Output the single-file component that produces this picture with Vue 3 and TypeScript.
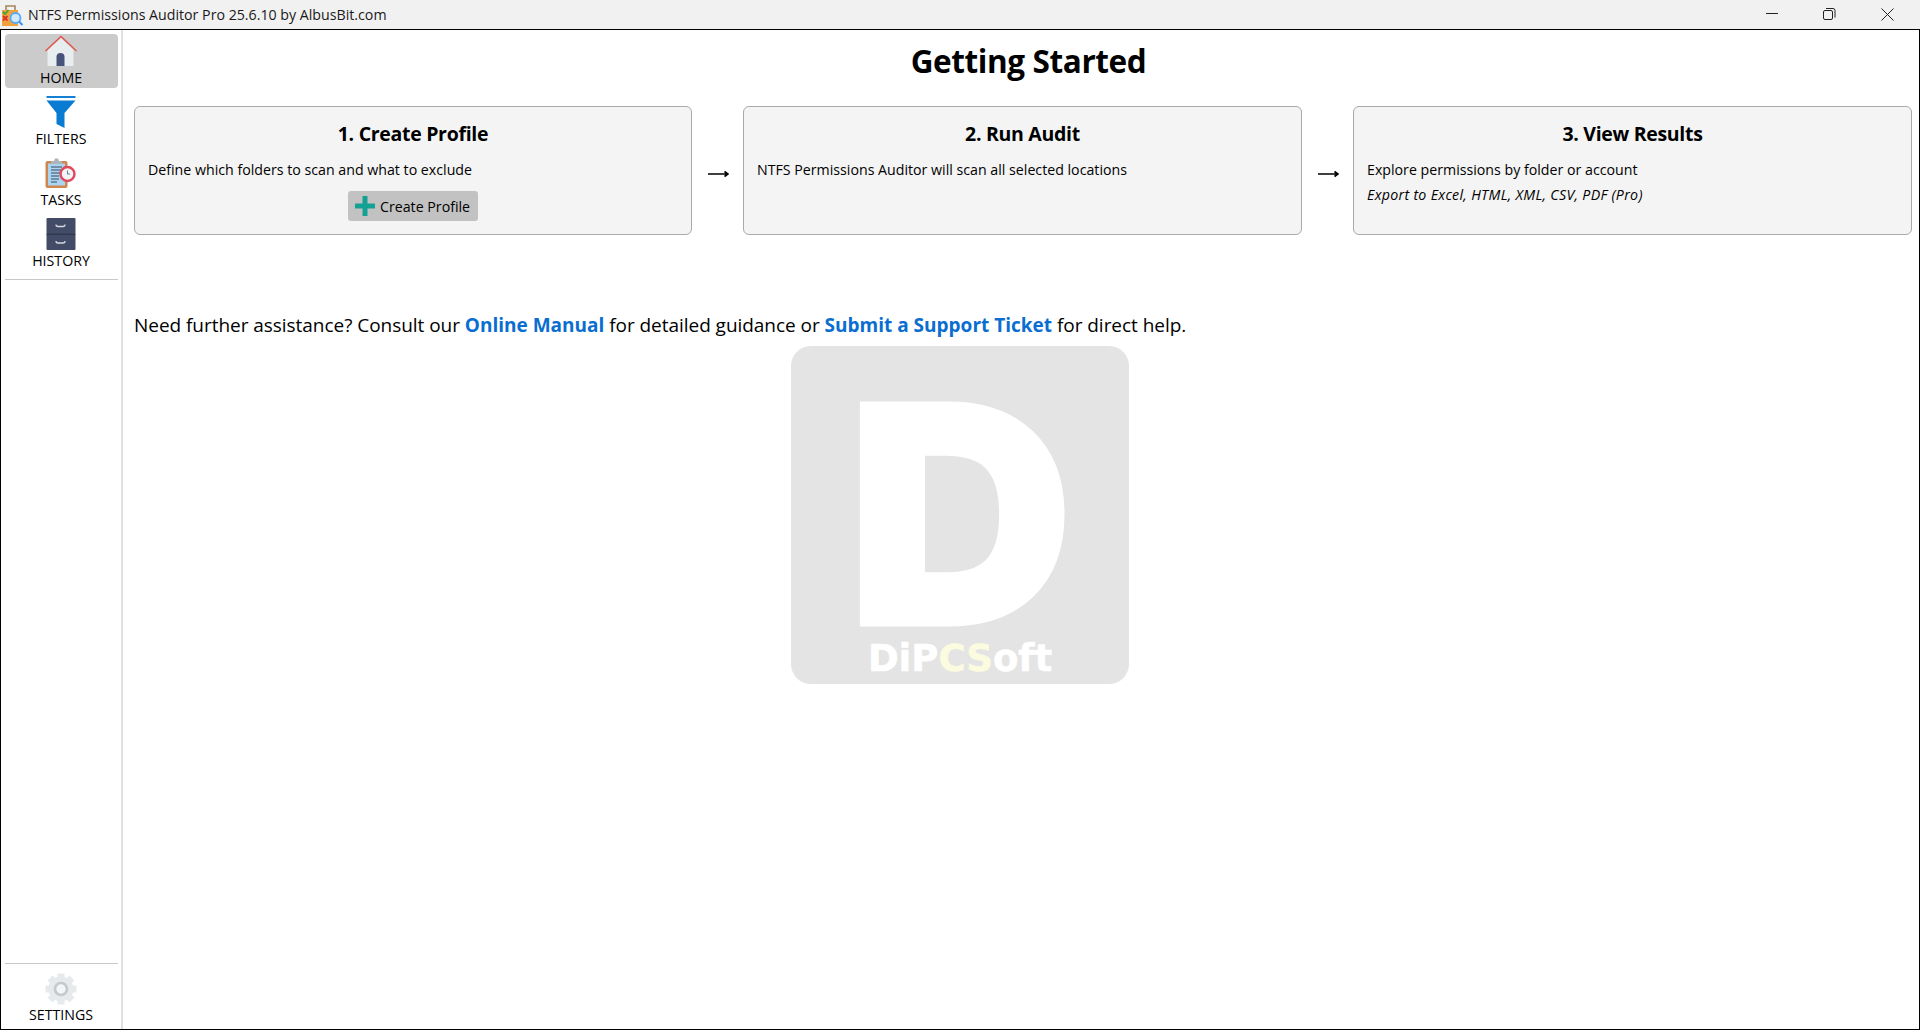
<script setup lang="ts">
interface StepCard {
  title: string
  lines: string[]
  note?: string
  action?: string
}

const navItems = [
  { id: 'home', label: 'HOME' },
  { id: 'filters', label: 'FILTERS' },
  { id: 'tasks', label: 'TASKS' },
  { id: 'history', label: 'HISTORY' },
]

const steps: StepCard[] = [
  {
    title: '1. Create Profile',
    lines: ['Define which folders to scan and what to exclude'],
    action: 'Create Profile',
  },
  {
    title: '2. Run Audit',
    lines: ['NTFS Permissions Auditor will scan all selected locations'],
  },
  {
    title: '3. View Results',
    lines: ['Explore permissions by folder or account'],
    note: 'Export to Excel, HTML, XML, CSV, PDF (Pro)',
  },
]
</script>

<template>
  <div class="window">
    <header class="titlebar">
      <svg class="app-icon" viewBox="0 0 24 24" width="24" height="24">
        <path d="M6 8V3h9v5" fill="none" stroke="#a5865c" stroke-width="1.6" />
        <rect x="2" y="7" width="16" height="16" fill="#f0a23c" />
        <path d="M3 9l2 2 3.500-4" fill="none" stroke="#3fa535" stroke-width="1.8" />
        <path d="M3 13l4.500 4.500M7.500 13L3 17.500" stroke="#d9302a" stroke-width="1.8" />
        <circle cx="15.500" cy="15" r="5" fill="#d3e8fb" stroke="#55aaff" stroke-width="1.800" />
        <path d="M19 18.500l3.500 3.500" stroke="#3f97ef" stroke-width="2.200" />
      </svg>
      <span class="app-title">NTFS Permissions Auditor Pro 25.6.10 by AlbusBit.com</span>
      <div class="win-controls">
        <svg viewBox="0 0 58 29" width="58" height="29"><path d="M24 13.500h12" stroke="#222" fill="none" /></svg>
        <svg viewBox="0 0 58 29" width="58" height="29">
          <rect x="23.500" y="10.500" width="9" height="9" rx="1.500" fill="none" stroke="#222" />
          <path d="M26 8.500h7a2 2 0 0 1 2 2v7" fill="none" stroke="#222" />
        </svg>
        <svg viewBox="0 0 58 29" width="58" height="29"><path d="M23.500 8.500l12 12M35.500 8.500l-12 12" stroke="#222" fill="none" /></svg>
      </div>
    </header>

    <div class="body">
      <nav class="sidebar">
        <div class="nav-top">
          <div v-for="item in navItems" :key="item.id" class="nav-item" :class="{ active: item.id === 'home' }">
            <svg v-if="item.id === 'home'" viewBox="0 0 34 34" width="34" height="34">
              <path d="M3.500 15L17 3l12.500 12v16H3.500z" fill="#e8edf0" />
              <path d="M1.500 16L17 1.500 32.500 16" fill="none" stroke="#e2574c" stroke-width="1.500" />
              <path d="M12.500 31V22a4 4 0 0 1 8 0v9z" fill="#47537a" />
            </svg>
            <svg v-else-if="item.id === 'filters'" viewBox="0 0 34 34" width="34" height="34">
              <rect x="2.500" y="0" width="29" height="2" fill="#1681d4" />
              <path d="M2.500 4.500h29L20.500 17v15l-8-4V17z" fill="#0a7bd2" />
            </svg>
            <svg v-else-if="item.id === 'tasks'" viewBox="0 0 34 34" width="34" height="34">
              <rect x="1.500" y="4" width="22" height="27" rx="2" fill="#d0874f" />
              <rect x="4" y="6.500" width="17" height="22" fill="#a9d5f2" />
              <path d="M11 1.500h3l1 2.500h3v3H7V4h3z" fill="#aeb4b8" />
              <path d="M7 10h11M7 13h11M7 16h9M7 19h8M7 22h8M7 25h6" stroke="#3e4a5e" stroke-width="1" />
              <circle cx="23.500" cy="17" r="7" fill="#f2f4f6" stroke="#e0485c" stroke-width="2.400" />
              <path d="M23.500 13.500V17H26" fill="none" stroke="#5d7fa8" stroke-width="1" />
            </svg>
            <svg v-else viewBox="0 0 34 34" width="34" height="34">
              <rect x="2.500" y="0" width="29" height="16" rx="1" fill="#434c66" />
              <rect x="2.500" y="16" width="29" height="16" rx="1" fill="#434c66" />
              <rect x="2.500" y="15.500" width="29" height="1.500" fill="#333a50" />
              <path d="M12 6.500q0 2 2 2h5q2 0 2-2M12 23q0 2 2 2h5q2 0 2-2" fill="none" stroke="#d6d9e2" stroke-width="1.300" />
            </svg>
            <span class="nav-label">{{ item.label }}</span>
          </div>
        </div>
        <div class="nav-bottom">
          <div class="nav-item">
            <svg viewBox="0 0 34 34" width="34" height="34">
              <circle cx="17" cy="17" r="12.500" fill="#e6eaec" />
              <path d="M17 1.500v31M1.500 17h31M6 6l22 22M28 6L6 28" stroke="#e6eaec" stroke-width="7" />
              <circle cx="17" cy="17" r="6" fill="#f3f5f6" stroke="#c6c9cb" stroke-width="2.600" />
            </svg>
            <span class="nav-label">SETTINGS</span>
          </div>
        </div>
      </nav>

      <main class="content">
        <h1 class="page-title">Getting Started</h1>
        <section class="steps">
          <template v-for="(step, i) in steps" :key="step.title">
            <article class="step-card">
              <h2>{{ step.title }}</h2>
              <p v-for="line in step.lines" :key="line">{{ line }}</p>
              <p v-if="step.note" class="note">{{ step.note }}</p>
              <button v-if="step.action" class="create-btn">
                <svg viewBox="0 0 20 20" width="20" height="20">
                  <path d="M7.500 0h5v7.500h7.500v5h-7.500v7.500h-5v-7.500H0v-5h7.500z" fill="#12a192" />
                </svg>
                {{ step.action }}
              </button>
            </article>
            <div v-if="i < steps.length - 1" class="arrow">
              <svg viewBox="0 0 22 12" width="22" height="12">
                <path d="M1 6h20M17.500 3.500L21 6l-3.500 2.500" fill="none" stroke="#000" stroke-width="1.700" />
              </svg>
            </div>
          </template>
        </section>

        <p class="help">
          Need further assistance? Consult our <a href="#">Online Manual</a> for detailed guidance or
          <a href="#">Submit a Support Ticket</a> for direct help.
        </p>

        <div class="logo">
          <span class="logo-d">D</span>
          <span class="logo-name">DiP<em>CS</em>oft</span>
        </div>
      </main>
    </div>
  </div>
</template>

<style scoped>
.window {
  height: 1030px;
  display: flex;
  flex-direction: column;
  font-family: "Open Sans", "Noto Sans", sans-serif;
  color: #000;
  background: #fff;
  overflow: hidden;
}

.titlebar {
  height: 29px;
  flex: none;
  display: flex;
  align-items: center;
  background: #f1f1f1;
  border-bottom: 1px solid #000;
  box-sizing: content-box;
}

.app-icon {
  width: 24px;
  height: 24px;
  margin-right: 4px;
}

.app-title {
  font-size: 14.2px;
  color: #1a1a1a;
}

.win-controls {
  margin-left: auto;
  display: flex;
  padding-right: 4px;
}

.body {
  flex: 1;
  min-height: 0;
  display: flex;
  border-left: 1px solid #000;
  border-right: 1px solid #000;
  border-bottom: 1px solid #000;
}

.sidebar {
  width: 120px;
  flex: none;
  border-right: 2px solid #e0e0e0;
  display: flex;
  flex-direction: column;
  justify-content: space-between;
}

.nav-top {
  padding: 4px 3px 6px 4px;
  display: flex;
  flex-direction: column;
  gap: 7px;
}

.nav-top::after {
  content: "";
  height: 1px;
  background: #c8c8c8;
  margin-top: 1px;
}

.nav-item {
  height: 54px;
  display: flex;
  flex-direction: column;
  align-items: center;
  justify-content: flex-start;
  border-radius: 4px;
  padding: 1px 1px 0 0;
  box-sizing: border-box;
}

.nav-item.active {
  background: #cbcbcb;
}

.nav-label {
  font-size: 14.2px;
  line-height: 18px;
}

.nav-bottom {
  margin: 0 3px 0 4px;
  border-top: 1px solid #c8c8c8;
  padding: 7px 0 0;
  height: 66px;
  box-sizing: border-box;
}

.content {
  flex: 1;
  min-width: 0;
  padding: 0 7px 0 11px;
}

.page-title {
  margin: 0;
  height: 76px;
  line-height: 61px;
  text-align: center;
  font-size: 31.500px;
  font-weight: 700;
  letter-spacing: -0.400px;
  padding-left: 11px;
}

.steps {
  display: grid;
  grid-template-columns: 558px 51px 559px 51px 1fr;
  height: 129px;
}

.step-card {
  border: 1px solid #aaa;
  border-radius: 6px;
  background: #f4f4f4;
  padding: 14px 13px 0;
  box-sizing: border-box;
}

.step-card h2 {
  margin: 0 0 11px;
  text-align: center;
  font-size: 19.500px;
  line-height: 26px;
  font-weight: 700;
  letter-spacing: -0.300px;
}

.step-card p {
  margin: 0;
  font-size: 14.200px;
  line-height: 24px;
}

.step-card .note {
  margin-top: 1px;
  font-style: italic;
  letter-spacing: 0.300px;
}

.create-btn {
  display: flex;
  align-items: center;
  gap: 5px;
  width: 130px;
  height: 30px;
  margin: 9px auto 0;
  padding: 0 0 0 7px;
  border: none;
  border-radius: 3px;
  background: #c2c2c2;
  font-family: inherit;
  font-size: 14.200px;
  color: #000;
}

.arrow {
  display: flex;
  align-items: center;
  justify-content: center;
  padding-top: 7px;
}

.help {
  margin: 76px 0 0;
  font-size: 19px;
  line-height: 28px;
  letter-spacing: -0.040px;
}

.help a {
  color: #0a6ed1;
  font-weight: 700;
  text-decoration: none;
  letter-spacing: 0;
}

.logo {
  width: 338px;
  height: 338px;
  margin: 7px 0 0 657px;
  border-radius: 20px;
  background: #e4e4e4;
  display: flex;
  flex-direction: column;
  align-items: center;
}

.logo-d {
  margin-top: 56px;
  height: 225px;
  font-family: Inter, sans-serif;
  font-weight: 900;
  font-size: 305px;
  line-height: 225px;
  color: #fff;
  -webkit-text-stroke: 3px #fff;
  transform: scaleX(1.030);
}

.logo-name {
  margin-top: 16px;
  font-family: "DejaVu Sans", sans-serif;
  font-weight: 700;
  font-size: 37px;
  line-height: 32px;
  color: #fff;
  -webkit-text-stroke: 0.600px #fff;
}

.logo-name em {
  font-style: normal;
  color: #fbfbe0;
  -webkit-text-stroke: 0.600px #fbfbe0;
}
</style>
